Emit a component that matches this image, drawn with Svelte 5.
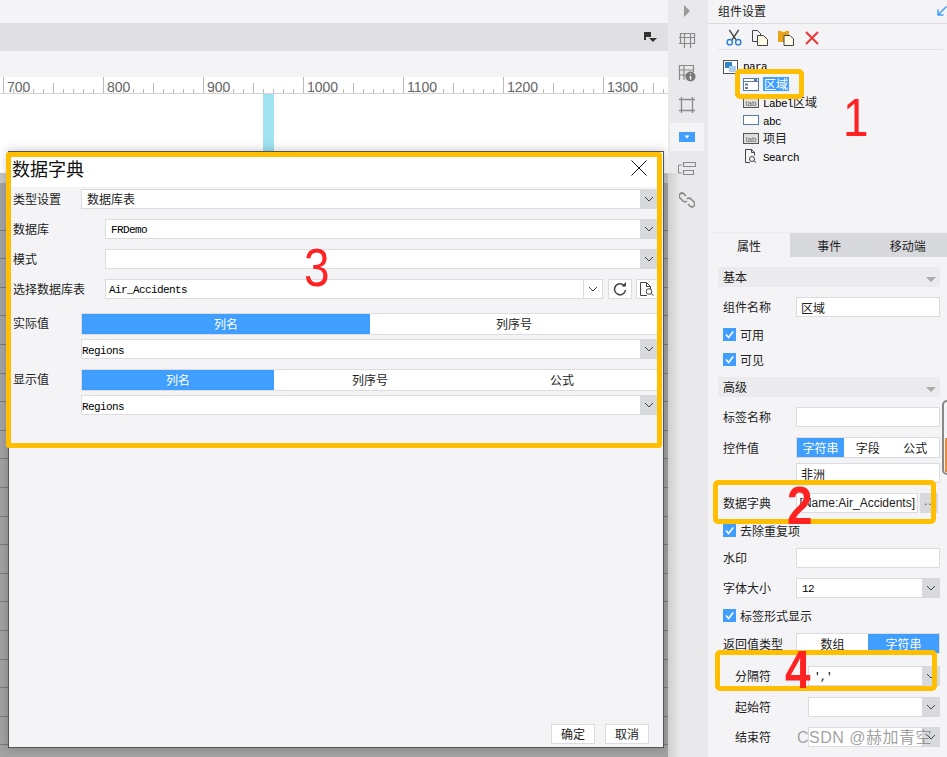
<script>
  const rulerLabels = [700, 800, 900, 1000, 1100, 1200, 1300]
  const ticks = Array.from({ length: 67 }, (_, i) => i)
  const sheetLines = Array.from({ length: 21 }, (_, i) => i)
</script>

{#snippet chev()}
  <span class="arrow">
    <svg width="10" height="6" viewBox="0 0 10 6"><path d="M1 1l4 4 4-4" fill="none" stroke="#444" stroke-width="1"/></svg>
  </span>
{/snippet}

{#snippet select(value, mono = true)}
  <div class="select">
    <span class="val" class:mono>{value}</span>
    {@render chev()}
  </div>
{/snippet}

{#snippet check(text)}
  <span class="box">
    <svg width="13" height="13" viewBox="0 0 13 13"><path d="M3 6.500l2.600 3L10.200 3.400" fill="none" stroke="#fff" stroke-width="1.600"/></svg>
  </span>
  <span class="check-text">{text}</span>
{/snippet}

{#snippet lab()}
  <svg class="node" width="16" height="11" viewBox="0 0 16 11">
    <rect x=".5" y=".5" width="15" height="10" fill="#ddd" stroke="#555"/>
    <text x="8" y="8.500" text-anchor="middle" font-size="8" fill="#666" font-family="Liberation Sans">lab</text>
  </svg>
{/snippet}

<div class="shell">
  <div class="main">
    <div class="top"></div>
    <div class="toolbar">
      <svg width="13" height="11" viewBox="0 0 13 11">
        <path d="M0 0h7v2H2v6H0z" fill="#333"/>
        <path d="M2 2h5v3H2z" fill="#333"/>
        <path d="M5 6h8l-4 4z" fill="#333"/>
      </svg>
    </div>
    <div class="strip"></div>
    <svg class="ruler" width="668" height="17" viewBox="0 0 668 17">
      {#each ticks as i}
        <line x1={3.5 + i * 10} x2={3.5 + i * 10} y1={i % 10 === 0 ? 0 : i % 5 === 0 ? 6 : 12} y2="16" stroke="#bbb"/>
      {/each}
      {#each rulerLabels as n, i}
        <text x={7 + i * 100} y="15" font-size="14" fill="#666" font-family="Liberation Sans">{n}</text>
      {/each}
      <rect x="0" y="16" width="668" height="1" fill="#d4d4d4"/>
    </svg>
    <div class="canvas">
      <div class="guide"></div>
    </div>
    <div class="sheet">
      <div class="sheet-head"></div>
      {#each sheetLines as i}
        <div class="sheet-line"></div>
      {/each}
    </div>

    <div class="dialog">
      <div class="dialog-head">
        <span class="dialog-title">数据字典</span>
        <svg width="16" height="16" viewBox="0 0 16 16"><path d="M.5.5l15 15M15.500.5l-15 15" stroke="#111" fill="none"/></svg>
      </div>
      <div class="dialog-body">
        <div class="form-row first">
          <span class="lbl short">类型设置</span>
          {@render select('数据库表', false)}
        </div>
        <div class="form-row">
          <span class="lbl">数据库</span>
          {@render select('FRDemo')}
        </div>
        <div class="form-row">
          <span class="lbl">模式</span>
          {@render select('')}
        </div>
        <div class="form-row">
          <span class="lbl">选择数据库表</span>
          <div class="select table-select">
            <span class="val mono tight">Air_Accidents</span>
            <span class="arrow plain">
              <svg width="10" height="6" viewBox="0 0 10 6"><path d="M1 1l4 4 4-4" fill="none" stroke="#444"/></svg>
            </span>
          </div>
          <button class="icon-btn refresh" aria-label="刷新">
            <svg width="14" height="14" viewBox="0 0 14 14">
              <path d="M11.500 4A5.500 5.500 0 1 0 12.500 8" fill="none" stroke="#444" stroke-width="1.500"/>
              <path d="M8.500 4.500h4.500V0z" fill="#444"/>
            </svg>
          </button>
          <button class="icon-btn search" aria-label="预览">
            <svg width="15" height="14" viewBox="0 0 15 14">
              <path d="M7 13.500H.5V.5h6l4 4v2.500M6.500.5v4h4" fill="none" stroke="#444"/>
              <circle cx="9" cy="9.500" r="2.800" fill="none" stroke="#444"/>
              <path d="M11 11.500l2.500 2" stroke="#444"/>
            </svg>
          </button>
        </div>

        <div class="form-row val-row">
          <span class="lbl short">实际值</span>
          <div class="seg two">
            <span class="on">列名</span>
            <span>列序号</span>
          </div>
        </div>
        <div class="form-row sub">
          {@render select('Regions')}
        </div>

        <div class="form-row val-row second">
          <span class="lbl short">显示值</span>
          <div class="seg three">
            <span class="on">列名</span>
            <span>列序号</span>
            <span>公式</span>
          </div>
        </div>
        <div class="form-row sub">
          {@render select('Regions')}
        </div>
      </div>
      <div class="dialog-foot">
        <button class="btn">确定</button>
        <button class="btn">取消</button>
      </div>
    </div>
  </div>

  <div class="rail">
    <div class="rail-shadow"></div>
    <div class="rail-item play">
      <svg width="8" height="12" viewBox="0 0 8 12"><path d="M1 0l6 6-6 6z" fill="#999"/></svg>
    </div>
    <div class="rail-item grid-icon">
      <svg width="18" height="18" viewBox="0 0 18 18"><path d="M2.500 12.500v-10h14v10zM1 6.500h16M1 12.500h16M6.500 2.500V17M12.500 2.500V17" fill="none" stroke="#8a8a8a" stroke-width="1.200"/></svg>
    </div>
    <div class="rail-item info-icon">
      <svg width="18" height="18" viewBox="0 0 18 18">
        <path d="M1.500 16V1.500h14V8M1.500 6h14M1.500 11h7M6 1.500V16" fill="none" stroke="#8a8a8a" stroke-width="1.200"/>
        <circle cx="12.500" cy="12.500" r="5" fill="#777"/>
        <path d="M12.500 9.500v1M12.500 12v3.500" stroke="#fff" stroke-width="1.500"/>
      </svg>
    </div>
    <div class="rail-item">
      <svg width="18" height="18" viewBox="0 0 18 18"><path d="M3.500 1v16M14.500 1v16M1 3.500h16M1 14.500h16" fill="none" stroke="#8a8a8a" stroke-width="1.300"/></svg>
    </div>
    <div class="rail-item active">
      <svg width="16" height="10" viewBox="0 0 16 10"><rect width="16" height="10" fill="#409eff"/><path d="M5.500 3.500h5L8 6.500z" fill="#fff"/></svg>
    </div>
    <div class="rail-item">
      <svg width="18" height="13" viewBox="0 0 18 13"><path d="M5.500.5h12v4h-12zM5.500 8.500h10v4h-10z" fill="none" stroke="#8a8a8a" stroke-width="1.200"/><path d="M3.500 3H.5v8h3" fill="none" stroke="#8a8a8a"/></svg>
    </div>
    <div class="rail-item">
      <svg width="16" height="16" viewBox="0 0 16 16"><path d="M7 4l-2-2a2.800 2.800 0 0 0-4 4l3 3a2.800 2.800 0 0 0 4 0M9 12l2 2a2.800 2.800 0 0 0 4-4l-3-3a2.800 2.800 0 0 0-4 0" fill="none" stroke="#8a8a8a" stroke-width="1.700"/></svg>
    </div>
  </div>

  <div class="panel">
    <div class="panel-title">
      <span>组件设置</span>
      <svg width="10" height="10" viewBox="0 0 10 10"><path d="M9.500.5L2 8M1 3.500V9h5.500" fill="none" stroke="#409eff" stroke-width="1.500"/></svg>
    </div>
    <div class="tools">
      <svg width="17" height="17" viewBox="0 0 17 17">
        <path d="M3.500.5l7.500 11M13.500.5L6 11.500" stroke="#444" stroke-width="1.500" fill="none"/>
        <circle cx="4" cy="13.500" r="2.800" fill="none" stroke="#2a7fd4" stroke-width="1.500"/>
        <circle cx="13" cy="13.500" r="2.800" fill="none" stroke="#2a7fd4" stroke-width="1.500"/>
      </svg>
      <svg width="16" height="16" viewBox="0 0 16 16">
        <path d="M5.500 11.500H.5V.5h5l3 3v2" fill="none" stroke="#444"/>
        <path d="M5.500 5.500h6l4 4v6h-10z" fill="#fff9e8" stroke="#444"/>
      </svg>
      <svg width="16" height="16" viewBox="0 0 16 16">
        <path d="M0 1h11v4H6v7H0z" fill="#e8a317"/>
        <path d="M3.500 0h4v2h-4z" fill="#fff3d0"/>
        <path d="M6 5.500h6l3.500 3.500v6.500H6z" fill="#fff9e8" stroke="#444"/>
      </svg>
      <svg width="14" height="14" viewBox="0 0 14 14"><path d="M1 1l12 12M13 1L1 13" stroke="#e84040" stroke-width="2.200"/></svg>
    </div>
    <div class="tree">
      <div class="tree-root">
        <svg width="15" height="14" viewBox="0 0 15 14">
          <rect x=".5" y=".5" width="14" height="13" fill="#fff" stroke="#555"/>
          <rect x="2" y="2" width="7" height="6" fill="#2f86c5"/>
          <rect x="6" y="6" width="7" height="6" fill="#a9cdea"/>
        </svg>
        <span class="mono">para</span>
      </div>
      <div class="tree-item">
        <svg class="node" width="16" height="13" viewBox="0 0 16 13">
          <rect x=".5" y=".5" width="15" height="12" fill="#fff" stroke="#5a7ba6"/>
          <path d="M.5 3.500h15" stroke="#5a7ba6"/>
          <rect x="2" y="5.500" width="3" height="2" fill="#5a7ba6"/>
          <rect x="2" y="9" width="3" height="2" fill="#5a7ba6"/>
          <rect x="11" y="1" width="3" height="2" fill="#5a7ba6"/>
        </svg>
        <span class="picked">区域</span>
      </div>
      <div class="tree-item">
        {@render lab()}
        <span><span class="mono">Label</span>区域</span>
      </div>
      <div class="tree-item">
        <svg class="node" width="16" height="10" viewBox="0 0 16 10"><rect x=".5" y=".5" width="15" height="9" fill="#fff" stroke="#5a7ba6"/></svg>
        <span class="mono">abc</span>
      </div>
      <div class="tree-item">
        {@render lab()}
        <span>项目</span>
      </div>
      <div class="tree-item">
        <svg class="node" width="16" height="14" viewBox="0 0 16 14">
          <path d="M7 13.500H2.500V.5h6l3 3v3M8.500.5v3h3" fill="none" stroke="#444"/>
          <circle cx="9" cy="10" r="2.500" fill="none" stroke="#444"/>
          <path d="M11 12l2 1.500" stroke="#444"/>
        </svg>
        <span class="mono">Search</span>
      </div>
    </div>

    <div class="tabs">
      <span class="tab on">属性</span>
      <span class="tab">事件</span>
      <span class="tab">移动端</span>
    </div>

    <div class="props">
      <div class="hdr m10">基本<i></i></div>
      <div class="row m10"><span class="name">组件名称</span><div class="input">区域</div></div>
      <div class="row m7">{@render check('可用')}</div>
      <div class="row m5">{@render check('可见')}</div>
      <div class="hdr m8">高级<i></i></div>
      <div class="row m10"><span class="name">标签名称</span><div class="input"></div></div>
      <div class="row seg-row m10">
        <span class="name">控件值</span>
        <div class="seg mini-three">
          <span class="on">字符串</span>
          <span>字段</span>
          <span>公式</span>
        </div>
      </div>
      <div class="row m5"><span class="name"></span><div class="input">非洲</div></div>
      <div class="row m10">
        <span class="name">数据字典</span>
        <div class="input dict">
          <span>[Name:Air_Accidents]</span>
        </div>
        <span class="more">..</span>
      </div>
      <div class="row m7">{@render check('去除重复项')}</div>
      <div class="row m8"><span class="name">水印</span><div class="input"></div></div>
      <div class="row m10"><span class="name">字体大小</span>{@render select('12')}</div>
      <div class="row m7">{@render check('标签形式显示')}</div>
      <div class="row seg-row m8">
        <span class="name">返回值类型</span>
        <div class="seg half">
          <span>数组</span>
          <span class="on">字符串</span>
        </div>
      </div>
      <div class="row indent m12"><span class="name">分隔符</span>{@render select("','")}</div>
      <div class="row indent m11"><span class="name">起始符</span>{@render select('')}</div>
      <div class="row indent m10"><span class="name">结束符</span>{@render select('')}</div>
    </div>
  </div>

  <!-- annotations drawn on top of the screenshot -->
  <div class="mark mark1"></div>
  <div class="mark mark2"></div>
  <div class="mark mark3"></div>
  <div class="mark mark4"></div>
  <span class="num n1">1</span>
  <span class="num n2">2</span>
  <span class="num n3">3</span>
  <span class="num n4">4</span>
  <div class="float-tab"><i></i></div>
  <span class="watermark">CSDN @赫加青空</span>
</div>

<style>
  :global(body) {
    margin: 0;
    background: #f4f4f6;
  }

  .shell {
    position: relative;
    width: 947px;
    height: 757px;
    overflow: hidden;
    display: grid;
    grid-template-columns: 668px 40px 239px;
    font-family: "Noto Sans CJK SC", "Liberation Sans", sans-serif;
    font-size: 12px;
    line-height: 20px;
    color: #222;
  }

  .mono {
    font-family: "Liberation Mono", monospace;
    font-size: 11px;
    letter-spacing: -0.6px;
    color: #000;
  }

  /* left work area */
  .main {
    position: relative;
    display: flex;
    flex-direction: column;
    min-height: 0;
  }

  .top {
    height: 23px;
    background: #f4f4f6;
  }

  .toolbar {
    height: 28px;
    background: #e0e0e2;
    display: flex;
    align-items: center;
    justify-content: flex-end;
    padding-right: 11px;
  }

  .strip {
    height: 26px;
    background: #f4f4f6;
  }

  .ruler {
    display: block;
    background: #fff;
    flex: none;
  }

  .canvas {
    height: 79px;
    background: #fff;
    flex: none;
  }

  .guide {
    width: 11px;
    height: 79px;
    margin-left: 263px;
    background: #9fe3f2;
  }

  .sheet {
    flex: 1;
    background: #a3a3a3;
    overflow: hidden;
  }

  .sheet-head {
    height: 29px;
    background: linear-gradient(#c6c6c6 10px, transparent 10px);
  }

  .sheet-line {
    height: 28.6px;
    box-sizing: border-box;
    border-bottom: 1px solid #7c7c7c;
  }

  .dialog {
    position: absolute;
    left: 8px;
    top: 151px;
    width: 654px;
    height: 595px;
    display: flex;
    flex-direction: column;
    background: #f4f4f6;
    border: 1px solid #555;
    box-shadow: 0 0 10px rgba(0, 0, 0, 0.25);
  }

  .dialog-head {
    height: 32px;
    padding: 0 16px 3px 3px;
    flex: none;
    background: #fff;
    display: flex;
    align-items: center;
    justify-content: space-between;
  }

  .dialog-title {
    font-size: 18px;
    line-height: 24px;
    color: #111;
  }

  .dialog-body {
    flex: 1;
    padding: 0 5px 0 4px;
  }

  .form-row {
    display: flex;
    margin-top: 10px;
    height: 20px;
  }

  .form-row.first {
    margin-top: 2px;
  }

  .lbl {
    width: 92px;
    flex: none;
  }

  .lbl.short {
    width: 68px;
  }

  .val-row {
    height: 22px;
    margin-top: 14px;
  }

  .val-row.second {
    margin-top: 10px;
  }

  .form-row.sub {
    margin-top: 4px;
    padding-left: 68px;
  }

  .select {
    flex: 1;
    min-width: 0;
    height: 20px;
    box-sizing: border-box;
    display: flex;
    align-items: center;
    background: #fff;
    border-top: 1px solid #dcdcde;
    border-bottom: 1px solid #dcdcde;
    border-left: 1px solid #dcdcde;
  }

  .val {
    flex: 1;
    padding-left: 5px;
    white-space: nowrap;
  }

  .val.mono {
    padding-top: 2px;
  }

  .val.tight {
    padding-left: 3px;
  }

  .form-row.sub .val {
    padding-left: 0;
    padding-top: 3px;
  }

  .arrow {
    width: 18px;
    height: 20px;
    flex: none;
    display: flex;
    align-items: center;
    justify-content: center;
    background: #d8d9dc;
  }

  .arrow.plain {
    background: #fff;
    height: 18px;
    border-left: 1px solid #dcdcde;
    border-right: 1px solid #dcdcde;
  }

  .table-select {
    flex: none;
    width: 498px;
  }

  .icon-btn {
    height: 20px;
    padding: 0;
    background: #fff;
    border: 1px solid #dcdcde;
    display: flex;
    align-items: center;
    justify-content: center;
    box-sizing: border-box;
  }

  .refresh {
    width: 24px;
    margin-left: 5px;
  }

  .search {
    width: 21px;
    margin-left: 4px;
    border-right: none;
  }

  .seg {
    flex: 1;
    height: 22px;
    box-sizing: border-box;
    display: grid;
    background: #fff;
    border: 1px solid #dcdcde;
    border-right: none;
    text-align: center;
  }

  .seg span {
    line-height: 20px;
  }

  .seg .on {
    background: #409eff;
    color: #fff;
  }

  .two {
    grid-template-columns: 1fr 1fr;
  }

  .three {
    grid-template-columns: 1fr 1fr 1fr;
  }

  .dialog-foot {
    display: flex;
    justify-content: flex-end;
    gap: 10px;
    padding: 0 14px 3px 0;
  }

  .btn {
    width: 44px;
    height: 20px;
    padding: 0;
    background: #fff;
    border: 1px solid #dcdcde;
    font: inherit;
    line-height: 18px;
    color: #222;
  }

  /* icon rail */
  .rail {
    position: relative;
    background: #e9e9eb;
    display: flex;
    flex-direction: column;
    padding-top: 1px;
  }

  .rail-shadow {
    position: absolute;
    left: 0;
    top: 173px;
    bottom: 0;
    width: 12px;
    background: linear-gradient(90deg, #cfcfcf, #e9e9eb);
  }

  .rail-item {
    position: relative;
    height: 32px;
    margin-left: 2px;
    width: 34px;
    flex: none;
    display: flex;
    align-items: center;
    justify-content: center;
  }

  .play {
    height: 20px;
  }

  .grid-icon {
    margin-top: 3px;
  }

  .info-icon {
    margin-top: 1px;
  }

  .rail-item.active {
    background: #f4f4f6;
    height: 28px;
    margin-top: 2px;
    margin-bottom: 1px;
  }

  /* right panel */
  .panel {
    background: #f4f4f6;
    display: flex;
    flex-direction: column;
  }

  .panel-title {
    height: 24px;
    flex: none;
    box-sizing: border-box;
    padding: 1px 0 0 10px;
    border-bottom: 1px solid #dcdcde;
    display: flex;
    justify-content: space-between;
  }

  .panel-title svg {
    margin-top: 5px;
  }

  .tools {
    height: 26px;
    flex: none;
    margin: 0 4px 0 10px;
    box-sizing: border-box;
    padding: 2px 0 0 8px;
    border-bottom: 1px solid #e2e2e4;
    display: flex;
    align-items: center;
    gap: 10px;
  }

  .tools svg {
    width: 16px;
  }

  .tree {
    height: 183px;
    flex: none;
    padding-top: 9px;
    box-sizing: border-box;
    border-bottom: 1px solid #eee;
  }

  .tree-root {
    height: 16px;
    display: flex;
    align-items: center;
    gap: 5px;
    margin-left: 15px;
    line-height: 16px;
  }

  .tree-item {
    height: 18px;
    display: flex;
    align-items: center;
    gap: 4px;
    margin-left: 35px;
    line-height: 18px;
  }

  .tree-item .mono {
    padding-top: 3px;
    display: inline-block;
  }

  .node {
    flex: none;
  }

  .picked {
    background: #409eff;
    color: #fff;
    line-height: 14px;
    padding: 0 1px;
  }

  .tabs {
    height: 24px;
    flex: none;
    display: grid;
    grid-template-columns: 82px 1fr 1fr;
    background: #d8d9dc;
    text-align: center;
    line-height: 25px;
  }

  .tab.on {
    background: #f4f4f6;
  }

  .props {
    padding: 0 7px 0 10px;
  }

  .hdr {
    height: 20px;
    display: flex;
    justify-content: space-between;
    align-items: center;
    padding: 0 4px 0 5px;
    background: #ebebed;
  }

  .hdr i {
    width: 0;
    height: 0;
    margin-top: 4px;
    border: 5px solid transparent;
    border-top: 5px solid #aaa;
    border-bottom: 0;
  }

  .row {
    display: flex;
    align-items: center;
    height: 20px;
    padding-left: 5px;
  }

  .check-text {
    padding-top: 2px;
  }

  .seg-row {
    height: 21px;
  }

  .seg-row .seg {
    height: 21px;
    border-right: 1px solid #dcdcde;
  }

  .seg-row .seg span {
    line-height: 19px;
  }

  .mini-three {
    grid-template-columns: 47px 1fr 1fr;
  }

  .half {
    grid-template-columns: 1fr 1fr;
  }

  .name {
    width: 73px;
    flex: none;
    white-space: nowrap;
  }

  .indent {
    padding-left: 17px;
  }

  .input {
    flex: 1;
    min-width: 0;
    height: 20px;
    box-sizing: border-box;
    background: #fff;
    border: 1px solid #dcdcde;
    padding-left: 4px;
    line-height: 19px;
    overflow: hidden;
    white-space: nowrap;
  }

  .dict {
    flex: none;
    width: 122px;
    padding: 0 2px 0 0;
    display: flex;
    justify-content: flex-end;
    font-family: "Liberation Sans", sans-serif;
    font-size: 12px;
  }

  .more {
    width: 18px;
    height: 20px;
    margin-left: 2px;
    flex: none;
    background: #d8d9dc;
    color: #555;
    font-family: "Liberation Sans", sans-serif;
    font-size: 12px;
    letter-spacing: 1px;
    line-height: 16px;
    padding-left: 4px;
    box-sizing: border-box;
  }

  .box {
    width: 13px;
    height: 13px;
    flex: none;
    margin-right: 4px;
    background: #409eff;
    display: flex;
  }

  .m5 { margin-top: 5px; }
  .m7 { margin-top: 7px; }
  .m8 { margin-top: 8px; }
  .m10 { margin-top: 10px; }
  .m11 { margin-top: 11px; }
  .m12 { margin-top: 12px; }

  /* annotations */
  .mark {
    position: absolute;
    box-sizing: border-box;
    border: 5px solid #ffbf00;
    border-radius: 3px;
  }

  .mark1 {
    left: 735px;
    top: 69px;
    width: 69px;
    height: 30px;
    border-radius: 5px;
  }

  .mark2 {
    left: 713px;
    top: 480px;
    width: 223px;
    height: 44px;
    border-radius: 5px;
  }

  .mark3 {
    left: 6px;
    top: 152px;
    width: 656px;
    height: 296px;
  }

  .mark4 {
    left: 715px;
    top: 650px;
    width: 222px;
    height: 41px;
    border-radius: 5px;
  }

  .num {
    position: absolute;
    font-family: "Liberation Sans", sans-serif;
    font-size: 54px;
    line-height: 54px;
    color: #ff2222;
    transform: scaleX(0.85);
    transform-origin: left center;
  }

  .n1 { left: 843px; top: 90px; }
  .n2 { left: 787px; top: 478px; font-weight: 700; }
  .n3 { left: 304px; top: 240px; }
  .n4 { left: 785px; top: 642px; font-weight: 700; }

  .float-tab {
    position: absolute;
    left: 942px;
    top: 400px;
    width: 10px;
    height: 75px;
    box-sizing: border-box;
    border: 2px solid #888;
    border-radius: 5px;
    background: #f4f4f6;
  }

  .float-tab i {
    display: block;
    margin: 36px 0 0 1px;
    height: 34px;
    background: #f08a3c;
  }

  .watermark {
    position: absolute;
    left: 797px;
    top: 727px;
    font-family: "Liberation Sans", "Noto Sans CJK SC", sans-serif;
    font-size: 16px;
    letter-spacing: 0.5px;
    line-height: 22px;
    color: rgba(120, 120, 120, 0.7);
    white-space: nowrap;
  }
</style>
